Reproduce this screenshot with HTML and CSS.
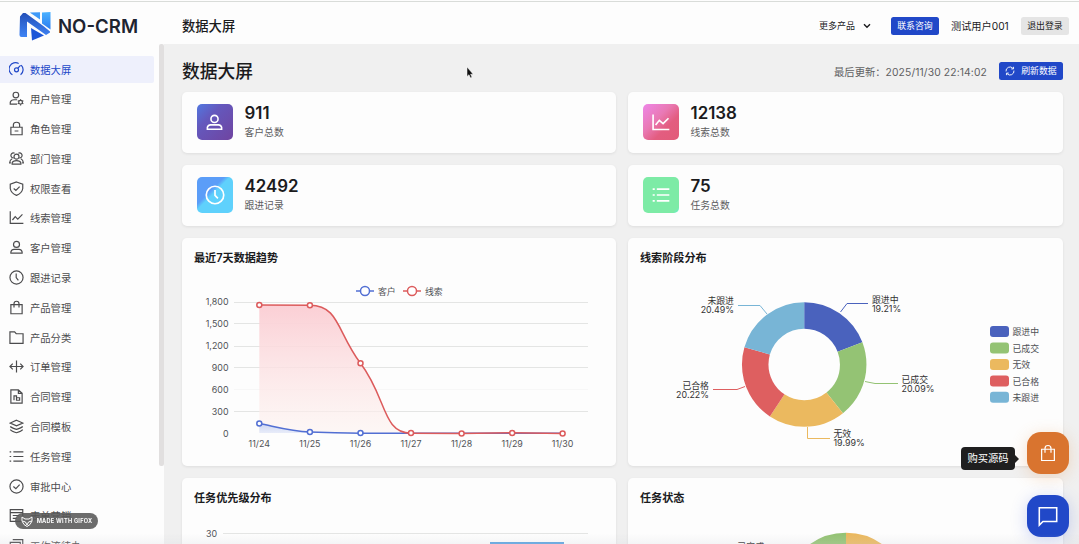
FILE: index.html
```html
<!DOCTYPE html>
<html lang="zh-CN">
<head>
<meta charset="utf-8">
<title>NO-CRM</title>
<link rel="stylesheet" href="styles.css">
</head>
<body>
<div class="app">
  <header class="header">
    <div class="brand">
      <svg class="brand-logo" viewBox="0 0 32 29">
        <defs>
          <linearGradient id="lg1" x1="0" y1="0" x2="0" y2="1"><stop offset="0" stop-color="#2450b8"/><stop offset="1" stop-color="#3f84f5"/></linearGradient>
          <linearGradient id="lg2" x1="0" y1="0" x2="0" y2="1"><stop offset="0" stop-color="#4bb2ff"/><stop offset="1" stop-color="#2b7cf0"/></linearGradient>
        </defs>
        <path d="M1 4.500L4 1H6.500L25 14.500L31 19.500V20.500L27 23L8 9.500V25H2.500Q.500 25 .500 23Z" fill="url(#lg1)"/>
        <path d="M11 0.500L21 .300V7.500L11.500 1Z" fill="#3f9af8"/>
        <path d="M23 .500L31.500 0V17.500L23 11.500Z" fill="url(#lg2)"/>
        <path d="M12 16L25 23.500L13 28.500Z" fill="#1d56d8"/>
      </svg>
      <span class="brand-name">NO-CRM</span>
    </div>
    <div class="header-title">数据大屏</div>
    <div class="header-actions">
      <span class="more">更多产品<svg class="chevron" viewBox="0 0 8 6"><path d="M1 1.200L4 4.200L7 1.200"/></svg></span>
      <button class="btn btn-primary contact">联系咨询</button>
      <span class="user">测试用户001</span>
      <button class="btn btn-plain">退出登录</button>
    </div>
  </header>

  <div class="body">
    <aside class="sidebar">
      <nav class="menu">
        <a class="item active"><svg class="ico" viewBox="0 0 24 24"><path d="M15.500 2.300A10.300 10.300 0 0 0 5.500 20.500M19.500 5A10.300 10.300 0 0 1 18.500 20.500M14 10L18.500 5.500"/><circle cx="12" cy="12.500" r="3.200"/></svg>数据大屏</a>
        <a class="item"><svg class="ico" viewBox="0 0 24 24"><circle cx="11" cy="6.500" r="4.500"/><path d="M13 21H2V18Q3 14 8 14H13"/><circle cx="18.500" cy="18" r="3"/><path d="M18.500 13V15M18.500 21V23M14 15.500L16 16.500M21 19.500L23 20.500M14 20.500L16 19.500M21 16.500L23 15.500"/></svg>用户管理</a>
        <a class="item"><svg class="ico" viewBox="0 0 24 24"><path d="M3 10H21V22H3ZM7 10V6Q7 2 12 2T17 6V10M9 16H15"/></svg>角色管理</a>
        <a class="item"><svg class="ico" viewBox="0 0 24 24"><circle cx="12" cy="9" r="4"/><path d="M5 21V19Q6 15.500 12 15.500T19 19V21ZM7.500 11A4 4 0 1 1 9 3.500M16.500 11A4 4 0 1 0 15 3.500M5 12.500Q1.500 14 1 19H3M19 12.500Q22.500 14 23 19H21"/></svg>部门管理</a>
        <a class="item"><svg class="ico" viewBox="0 0 24 24"><path d="M12 1.500L22 5V12Q21 19 12 23Q3 19 2 12V5ZM7.500 12L11 15L17 9"/></svg>权限查看</a>
        <a class="item"><svg class="ico" viewBox="0 0 24 24"><path d="M2 2V21.500H23M5.500 16L10 10.500L14 14.500L21.500 7"/></svg>线索管理</a>
        <a class="item"><svg class="ico" viewBox="0 0 24 24"><circle cx="12" cy="7" r="4.800"/><path d="M3 21V19Q4 15 8 15H16Q20 15 21 19V21Z"/></svg>客户管理</a>
        <a class="item"><svg class="ico" viewBox="0 0 24 24"><circle cx="12" cy="12" r="10.500"/><path d="M11.500 5.500V12L15 16.500"/></svg>跟进记录</a>
        <a class="item"><svg class="ico" viewBox="0 0 24 24"><path d="M3 7.500H21V22H3ZM8 12V6Q8 2 12 2T16 6V12"/></svg>产品管理</a>
        <a class="item"><svg class="ico" viewBox="0 0 24 24"><path d="M1.500 3H9L11.500 6H22.500V21.500H1.500Z"/></svg>产品分类</a>
        <a class="item"><svg class="ico" viewBox="0 0 24 24"><path d="M12 2.500V21.500M1.500 12H22.500M6 7.500L1.500 12L6 16.500M18 7.500L22.500 12L18 16.500"/></svg>订单管理</a>
        <a class="item"><svg class="ico" viewBox="0 0 24 24"><path d="M3 1.500H15L21 7V22.500H3ZM15 1.500V7H21M8 18V11H12V14M12 18V14H17V18Z"/></svg>合同管理</a>
        <a class="item"><svg class="ico" viewBox="0 0 24 24"><path d="M12 2L22 6.500L12 11L2 6.500ZM2 12Q4 14 12 16.500Q20 14 22 12M2 17Q4 19.500 12 22Q20 19.500 22 17"/></svg>合同模板</a>
        <a class="item"><svg class="ico" viewBox="0 0 24 24"><path d="M7 4.500H23M7 12H23M7 19.500H23M1 4.500H3.500M1 12H3.500M1 19.500H3.500"/></svg>任务管理</a>
        <a class="item"><svg class="ico" viewBox="0 0 24 24"><circle cx="12" cy="12" r="10.500"/><path d="M7 12L11 15.500L17 9"/></svg>审批中心</a>
        <a class="item"><svg class="ico" viewBox="0 0 24 24"><path d="M2 2.500H22V21.500H2ZM2 7.500H22M6 12H16M6 16.500H12"/></svg>表单营销</a>
        <a class="item"><svg class="ico" viewBox="0 0 24 24"><path d="M2 7H18V22H2ZM6 2.500H22V17"/></svg>工作流待办</a>
      </nav>
      <div class="scrollbar"></div>
    </aside>

    <main class="main">
      <div class="page-head">
        <h1 class="page-title">数据大屏</h1>
        <div class="page-tools">
          <span class="updated">最后更新：<span class="stamp">2025/11/30 22:14:02</span></span>
          <button class="btn btn-primary refresh"><svg class="refresh-ico" viewBox="0 0 24 24"><path d="M2.500 13A9.500 9.500 0 0 1 19 5.500M21.500 11A9.500 9.500 0 0 1 5 18.500M15 7H20.500V2M9 17H3.500V22"/></svg>刷新数据</button>
        </div>
      </div>
      <div class="grid">
        <section class="card stat">
          <div class="tile tile-purple"><svg viewBox="0 0 24 24"><circle cx="12" cy="7.500" r="4.500"/><path d="M3 20.500V18Q4 15 7 15H17Q20 15 21 18V20.500Z"/></svg></div>
          <div><div class="num">911</div><div class="label">客户总数</div></div>
        </section>
        <section class="card stat">
          <div class="tile tile-pink"><svg viewBox="0 0 24 24"><path d="M2.500 3V21H22M5.500 15.500L10 10L14.500 14L21 7.500"/></svg></div>
          <div><div class="num">12138</div><div class="label">线索总数</div></div>
        </section>
        <section class="card stat">
          <div class="tile tile-blue"><svg viewBox="0 0 24 24"><circle cx="12" cy="12" r="10.500"/><path d="M12 6V12.500L15.500 16"/></svg></div>
          <div><div class="num">42492</div><div class="label">跟进记录</div></div>
        </section>
        <section class="card stat">
          <div class="tile tile-green"><svg viewBox="0 0 24 24"><path d="M7 5H22M7 12H22M7 19H22M2 5H4.500M2 12H4.500M2 19H4.500"/></svg></div>
          <div><div class="num">75</div><div class="label">任务总数</div></div>
        </section>

        <section class="card chart">
          <h2 class="card-title">最近7天数据趋势</h2>
          <svg class="plot" viewBox="182 270 434 196">
            <defs>
              <linearGradient id="redFill" x1="0" y1="0" x2="0" y2="1"><stop offset="0" stop-color="#fbcfd5"/><stop offset="1" stop-color="#fdf3f0" stop-opacity=".6"/></linearGradient>
              <linearGradient id="blueFill" x1="0" y1="0" x2="0" y2="1"><stop offset="0" stop-color="#cdd6f2"/><stop offset="1" stop-color="#e8ecf9"/></linearGradient>
            </defs>
            <path class="gridline" d="M234 302.500H588M234 323.500H588M234 346.500H588M234 367.500H588M234 411.500H588"/>
            <path class="gridline faint" d="M234 389.500H588"/>
            <g class="axis end">
              <text x="228.500" y="305.300">1,800</text><text x="228.500" y="327.200">1,500</text><text x="228.500" y="349">1,200</text><text x="228.500" y="371">900</text><text x="228.500" y="393">600</text><text x="228.500" y="415">300</text><text x="228.500" y="437">0</text>
            </g>
            <g class="axis mid">
              <text x="259.300" y="447">11/24</text><text x="309.900" y="447">11/25</text><text x="360.500" y="447">11/26</text><text x="411" y="447">11/27</text><text x="461.600" y="447">11/28</text><text x="512.200" y="447">11/29</text><text x="562.600" y="447">11/30</text>
            </g>
            <path d="M259.300 305L309.900 305.300C339 305.300 337 332 360.500 363.300C387 398 382 433 411 433L259.300 433Z" fill="url(#redFill)"/>
            <path d="M259.300 423.500C275 426.500 290 431.200 309.900 432L360 433H259.300Z" fill="url(#blueFill)"/>
            <g class="series blue">
              <path d="M259.300 423.500C275 426.500 290 431.200 309.900 432Q335 433 360.500 433.200H562.600"/>
              <circle cx="259.300" cy="423.500" r="2.500"/><circle cx="309.900" cy="432" r="2.500"/><circle cx="360.500" cy="433" r="2.500"/>
            </g>
            <g class="series red">
              <path d="M259.300 305L309.900 305.300C339 305.300 337 332 360.500 363.300C387 398 382 433 411 433.200L461.600 433.400L512.200 432.800L562.600 433.400"/>
              <circle cx="259.300" cy="305" r="2.500"/><circle cx="309.900" cy="305.300" r="2.500"/><circle cx="360.500" cy="363.300" r="2.500"/><circle cx="411" cy="433" r="2.500"/><circle cx="461.600" cy="433.400" r="2.500"/><circle cx="512.200" cy="433" r="2.500"/><circle cx="562.600" cy="433.400" r="2.500"/>
            </g>
            <g class="series blue"><path d="M356 291H374"/><circle cx="365" cy="291" r="4.500"/></g>
            <g class="series red"><path d="M403 291H421"/><circle cx="412" cy="291" r="4.500"/></g>
            <g class="axis"><text x="378" y="294.500">客户</text><text x="425" y="294.500">线索</text></g>
          </svg>
        </section>

        <section class="card chart">
          <h2 class="card-title">线索阶段分布</h2>
          <svg class="plot" viewBox="628 270 435 196">
            <g class="ring" transform="rotate(-90 804.200 364.500)">
              <circle cx="804.200" cy="364.500" r="49" pathLength="100" stroke="#4a62bd" stroke-dasharray="19.210 80.790"/>
              <circle cx="804.200" cy="364.500" r="49" pathLength="100" stroke="#94c374" stroke-dasharray="20.090 79.910" stroke-dashoffset="-19.210"/>
              <circle cx="804.200" cy="364.500" r="49" pathLength="100" stroke="#ebb95f" stroke-dasharray="19.990 80.010" stroke-dashoffset="-39.300"/>
              <circle cx="804.200" cy="364.500" r="49" pathLength="100" stroke="#de5f60" stroke-dasharray="20.220 79.780" stroke-dashoffset="-59.290"/>
              <circle cx="804.200" cy="364.500" r="49" pathLength="100" stroke="#78b5d6" stroke-dasharray="20.490 79.510" stroke-dashoffset="-79.510"/>
            </g>
            <g class="leader">
              <path stroke="#4a62bd" d="M840.500 312L847 303.500H868"/>
              <path stroke="#94c374" d="M865 381.500L875 383.500H898"/>
              <path stroke="#ebb95f" d="M807.500 427V438.500H830"/>
              <path stroke="#de5f60" d="M745 386.500L737 389.500H713"/>
              <path stroke="#78b5d6" d="M767 314L760 305.500H738"/>
            </g>
            <g class="pie-label">
              <text x="872" y="302.500">跟进中</text><text x="872" y="311.500">19.21%</text>
              <text x="901.500" y="382.500">已成交</text><text x="901.500" y="391.500">20.09%</text>
              <text x="833.500" y="437">无效</text><text x="833.500" y="446">19.99%</text>
            </g>
            <g class="pie-label end">
              <text x="734" y="304">未跟进</text><text x="734" y="313">20.49%</text>
              <text x="709" y="388.700">已合格</text><text x="709" y="397.700">20.22%</text>
            </g>
            <rect x="990" y="326" width="19" height="11" rx="3" fill="#4a62bd"/>
            <rect x="990" y="342.500" width="19" height="11" rx="3" fill="#94c374"/>
            <rect x="990" y="359" width="19" height="11" rx="3" fill="#ebb95f"/>
            <rect x="990" y="375.500" width="19" height="11" rx="3" fill="#de5f60"/>
            <rect x="990" y="391.800" width="19" height="11" rx="3" fill="#78b5d6"/>
            <g class="axis"><text x="1012.500" y="335">跟进中</text><text x="1012.500" y="351.500">已成交</text><text x="1012.500" y="368">无效</text><text x="1012.500" y="384.500">已合格</text><text x="1012.500" y="400.700">未跟进</text></g>
          </svg>
        </section>

        <section class="card chart">
          <h2 class="card-title">任务优先级分布</h2>
          <svg class="plot" viewBox="182 510 434 196">
            <g class="axis end"><text x="217" y="536.500">30</text></g>
            <path class="gridline" d="M223 533.500H588"/>
            <rect x="490" y="542" width="74" height="140" fill="#5ba3e0"/>
          </svg>
        </section>
        <section class="card chart">
          <h2 class="card-title">任务状态</h2>
          <svg class="plot" viewBox="628 510 435 196">
            <g class="ring" transform="rotate(-90 846 595)">
              <circle cx="846" cy="595" r="49" pathLength="100" stroke="#ebb95f" stroke-dasharray="50 50"/>
              <circle cx="846" cy="595" r="49" pathLength="100" stroke="#94c374" stroke-dasharray="50 50" stroke-dashoffset="-50"/>
            </g>
            <g class="pie-label"><text x="737.500" y="549.500">已完成</text></g>
          </svg>
        </section>
      </div>
    </main>
  </div>
</div>

<div class="tip">购买源码</div>
<div class="fab fab-orange"><svg viewBox="0 0 24 24"><path d="M3.500 7H20.500V22H3.500ZM8 11.500V6Q8 2 12 2T16 6V11.500"/></svg></div>
<div class="fab fab-blue"><svg viewBox="0 0 24 24"><path d="M2.500 3H21.500V18H6.500L2.500 22Z"/></svg></div>
<div class="gif-badge"><svg viewBox="0 0 12 11"><path d="M1 1L4 3H8L11 1V5L9 8.500L6 10.500L3 8.500L1 5ZM1.500 5L4.500 6L6 9L7.500 6L10.500 5"/></svg>MADE WITH GIFOX</div>
<svg class="cursor" viewBox="0 0 8 13"><path d="M1 1V10.500L3 8.700L4.500 12L6 11.300L4.600 8.200H7.200Z"/></svg>
<div class="bottom-shade"></div>
</body>
</html>
```

FILE: styles.css
```css
* { box-sizing: border-box; }
body {
  margin: 0;
  overflow: hidden;
  font-family: Inter, "Noto Sans CJK SC", sans-serif;
  color: #1b1b1d;
  background: #fdfdfd;
}
.app { height: 544px; display: flex; flex-direction: column; overflow: hidden; }
.header {
  flex: none;
  height: 44px;
  padding: 7px 10px 0 19px;
  display: flex;
  align-items: center;
  background: linear-gradient(#fdfdfd 1px, #d9dcd9 1px, #d9dcd9 2px, #fdfdfd 2px);
}
.brand { width: 163px; display: flex; align-items: center; gap: 7px; }
.brand-logo { width: 32px; height: 29px; margin-top: 2px; }
.brand-name { font-size: 18.6px; font-weight: 600; color: #1e2430; line-height: 20px; }
.header-title { font-size: 13.3px; font-weight: 500; line-height: 20px; }
.header-actions { margin-left: auto; display: flex; align-items: center; white-space: nowrap; }
.more { font-size: 9px; display: flex; align-items: center; gap: 8px; }
.chevron { width: 8px; height: 6px; fill: none; stroke: #1b1b1d; stroke-width: 1.4; }
.contact { margin-left: 20px; }
.user { margin: 0 12px; width: 58px; font-size: 10.2px; }
.btn {
  height: 18px;
  width: 48px;
  padding: 0;
  border: 0;
  border-radius: 2.500px;
  font: 8.9px/18px Inter, "Noto Sans CJK SC", sans-serif;
  white-space: nowrap;
}
.btn-primary { background: #2148c8; color: #fff; }
.btn-plain { background: #e5e5e5; color: #222; }
.body { flex: 1; min-height: 0; display: flex; }
.sidebar { width: 164px; flex: none; display: flex; justify-content: space-between; overflow: hidden; }
.menu { padding-top: 12px; width: 154px; display: flex; flex-direction: column; gap: 2.800px; }
.item {
  flex: none;
  height: 27px;
  padding: 0 0 1px 9px;
  display: flex;
  align-items: center;
  gap: 6px;
  font-size: 10.3px;
  color: #4c4c4e;
}
.item.active { background: #eef0fc; color: #2148c8; border-radius: 0 2px 2px 0; }
.ico { width: 15px; height: 15px; fill: none; stroke: currentColor; stroke-width: 1.9; }
.scrollbar { width: 5px; height: 422px; background: #e1dfdf; border-radius: 2px; }
.main { flex: 1; padding: 15px 16px 0 18px; background: #f0f0f0; overflow: hidden; }
.page-head { height: 24px; margin-bottom: 9px; display: flex; align-items: center; justify-content: space-between; }
.page-title { margin: 0; padding-top: 1px; font-size: 17.8px; font-weight: 500; line-height: 24px; }
.page-tools { display: flex; align-items: center; gap: 12px; }
.updated { font-size: 10.3px; color: #606062; white-space: nowrap; }
.stamp { letter-spacing: .13px; }
.refresh { width: 64px; display: flex; align-items: center; justify-content: center; gap: 6px; }
.refresh-ico { width: 10px; height: 10px; fill: none; stroke: #fff; stroke-width: 2.2; }
.grid { display: grid; grid-template-columns: 434px 435px; grid-template-rows: 61px 61px 228px 228px; gap: 12px; }
.card { background: #fdfdfd; border-radius: 5px; box-shadow: 0 1px 3px rgba(0, 0, 0, .08); overflow: hidden; }
.stat { padding: 12px 15px; display: flex; gap: 12px; }
.tile { width: 35.5px; height: 36px; border-radius: 5px; display: flex; align-items: center; justify-content: center; }
.tile svg { width: 20px; height: 20px; fill: none; stroke: #fff; stroke-width: 2; }
.tile-purple svg { width: 19px; height: 19px; }
.tile-purple { background: linear-gradient(135deg, #5278e0, #6458bd 35%, #7044a0); }
.tile-pink { background: linear-gradient(135deg, #ee86e8, #e979b4 40%, #e35d80 65%, #e25b78); }
.tile-blue { background: linear-gradient(135deg, #5b9df8 38%, #5fd1fc 46%); }
.tile-green { background: linear-gradient(135deg, #7deba6 90%, #61f0d0); }
.num { font-size: 16.9px; font-weight: 600; line-height: 20px; margin-top: -1px; }
.label { font-size: 9.8px; line-height: 14px; margin-top: 3px; color: #5c5c5e; }
.chart { display: flex; flex-direction: column; }
.card-title { flex: none; margin: 0; padding: 12px 12px 0; height: 32px; font-size: 11.1px; line-height: 16px; font-weight: 600; }
.plot { display: block; width: 100%; height: 196px; }
.gridline { stroke: #e4e5e4; stroke-width: 1; fill: none; }
.faint { stroke: #f7f7f7; }
.axis { font-size: 8.9px; fill: #505256; }
.pie-label { font-size: 8.9px; fill: #333; }
.end { text-anchor: end; }
.mid { text-anchor: middle; }
.series { fill: none; stroke-width: 1.5; }
.series circle { fill: #fff; }
.blue { stroke: #526fd3; }
.red { stroke: #dc5b5c; }
.ring { fill: none; stroke-width: 26.5; }
.leader { fill: none; stroke-width: 1; }
.tip {
  position: fixed;
  left: 961px;
  top: 447px;
  width: 54px;
  height: 23px;
  border-radius: 4px;
  background: #1f1f20;
  color: #fff;
  font-size: 10.3px;
  line-height: 23px;
  text-align: center;
  white-space: nowrap;
}
.tip::after {
  content: "";
  position: absolute;
  left: 54px;
  top: 7.500px;
  border: 4px solid transparent;
  border-left-color: #1f1f20;
  border-right: 0;
}
.fab { position: fixed; left: 1027px; width: 42px; height: 42px; border-radius: 14px; display: flex; align-items: center; justify-content: center; }
.fab svg { fill: none; stroke: #fff; }
.fab-orange { top: 432px; background: #d9742f; box-shadow: 0 3px 16px rgba(230, 150, 80, .3); }
.fab-orange svg { width: 18px; height: 18px; stroke-width: 1.6; }
.fab-blue { top: 495px; background: #2148c8; box-shadow: 0 3px 16px rgba(60, 90, 220, .25); }
.fab-blue svg { width: 22px; height: 22px; stroke-width: 1.7; }
.gif-badge {
  position: fixed;
  left: 15px;
  top: 513px;
  width: 83px;
  height: 16px;
  border-radius: 8px;
  background: rgba(88, 88, 88, .88);
  color: #fff;
  display: flex;
  align-items: center;
  justify-content: center;
  gap: 4px;
  font-size: 5.6px;
  font-weight: 700;
  letter-spacing: .25px;
  white-space: nowrap;
}
.gif-badge svg { width: 12px; height: 11px; fill: none; stroke: #fff; stroke-width: 1; }
.cursor { position: fixed; left: 466px; top: 66px; width: 8px; height: 13px; fill: #111; stroke: #fff; stroke-width: .5; }
.bottom-shade { position: fixed; left: 0; right: 0; bottom: 0; height: 10px; background: linear-gradient(rgba(210, 212, 218, 0), rgba(210, 212, 218, .2)); }
```
